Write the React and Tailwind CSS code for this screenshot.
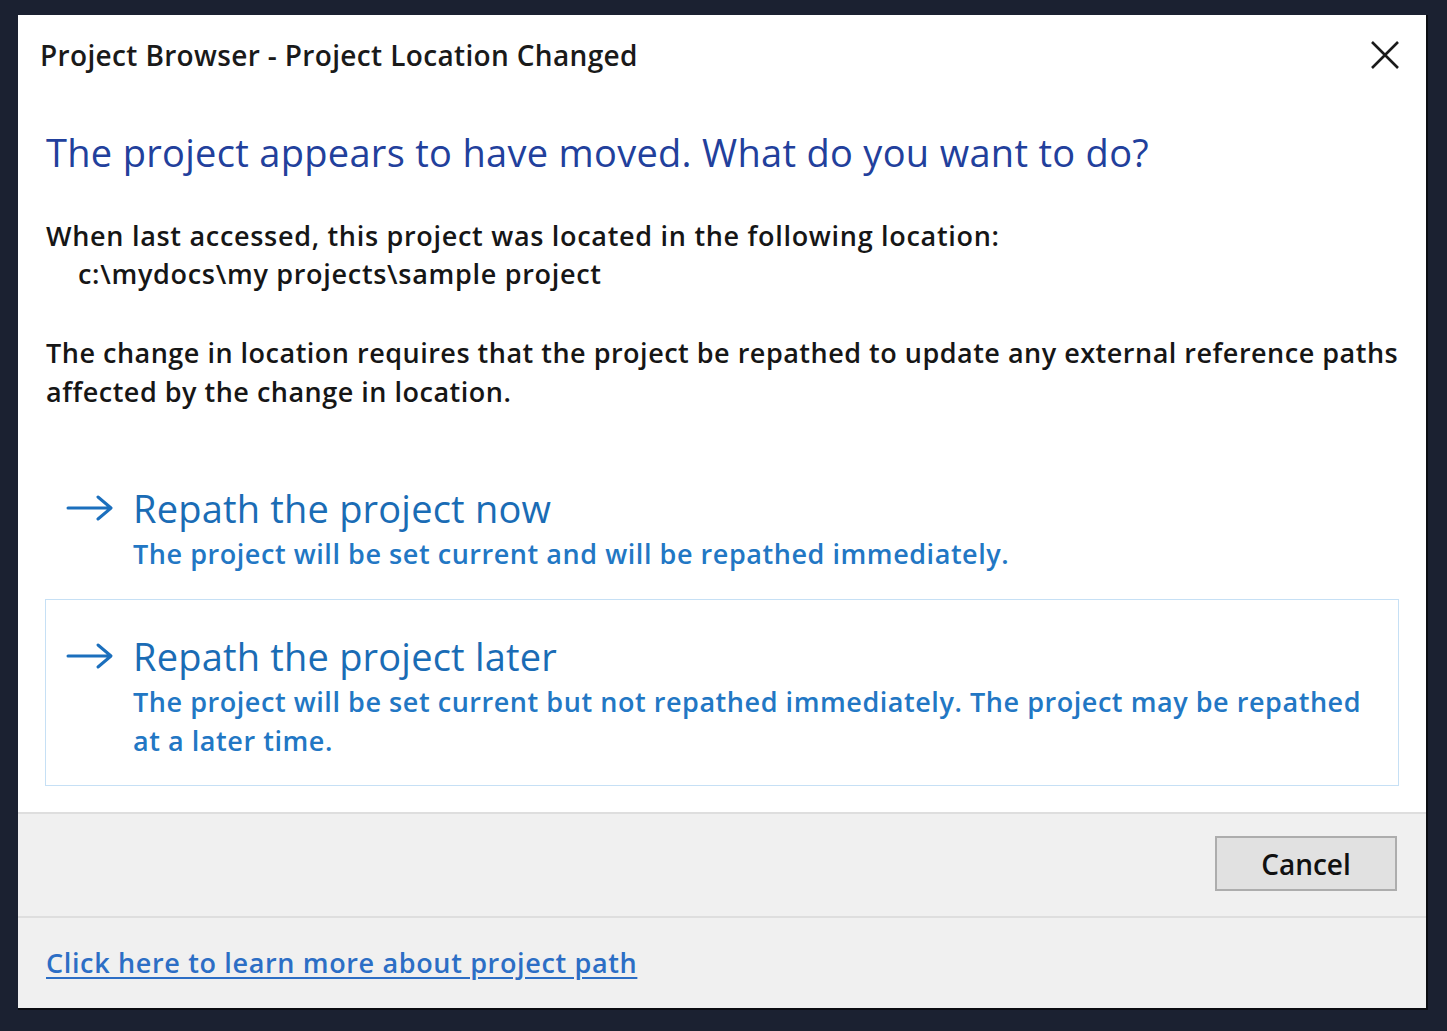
import React from 'react';

const font = { fontFamily: '"Open Sans", "Noto Sans", sans-serif' };

const Arrow = () => (
    <svg width="48" height="28" viewBox="0 0 48 28" className="shrink-0">
        <path d="M2 14 H44 M32 3 L45 14 L32 25" fill="none" stroke="#1b6fbd" strokeWidth="3" strokeLinecap="round" strokeLinejoin="round" />
    </svg>
);

const CommandLink = ({ title, lines, boxed }) => (
    <div className={`flex border pt-[30px] pb-[25px] pl-[20px] pr-[20px] ${boxed ? 'border-[#c6e0f5]' : 'border-transparent'}`}>
        <div className="w-[67px] h-[52px] flex items-center">
            <Arrow />
        </div>
        <div>
            <div className="text-[38px] tracking-[0.2px] leading-[52px] text-[#1a6cb5]">{title}</div>
            {lines.map((l, i) => (
                <div key={i} className="text-[27px] font-semibold tracking-[0.55px] leading-[39px] text-[#2277c4]">{l}</div>
            ))}
        </div>
    </div>
);

export default function App() {
    return (
        <div className="w-[1447px] h-[1031px] bg-[#1b2131] pt-[15px] pl-[18px] overflow-hidden" style={font}>
            <div className="w-[1410px] h-[995px] bg-white flex flex-col border-r-2 border-b-2 border-[#0b0d12]">
                {/* Title bar */}
                <div className="h-[80px] flex items-center justify-between pl-[22px] pr-[26px]">
                    <span className="text-[28px] font-semibold tracking-[0.35px] text-[#1a1a1a]">Project Browser - Project Location Changed</span>
                    <svg width="30" height="30" viewBox="0 0 30 30">
                        <path d="M2 2 L28 28 M28 2 L2 28" stroke="#1a1a1a" strokeWidth="2.6" />
                    </svg>
                </div>

                {/* Content */}
                <div className="flex-1 px-[27px]">
                    <div className="pl-[1px] mt-[32px] text-[38px] tracking-[0.3px] leading-[50px] text-[#22409c]">
                        The project appears to have moved. What do you want to do?
                    </div>
                    <div className="pl-[1px] mt-[40px] text-[27px] font-semibold tracking-[0.7px] leading-[38px] text-[#161616]">
                        <div>When last accessed, this project was located in the following location:</div>
                        <div className="pl-[32px]">c:\mydocs\my projects\sample project</div>
                    </div>
                    <div className="pl-[1px] mt-[40px] text-[27px] font-semibold tracking-[0.5px] leading-[39px] text-[#161616]">
                        The change in location requires that the project be repathed to update any external reference paths affected by the change in location.
                    </div>
                    <div className="mt-[40px]">
                        <CommandLink title="Repath the project now" lines={['The project will be set current and will be repathed immediately.']} />
                        <CommandLink
                            boxed
                            title="Repath the project later"
                            lines={['The project will be set current but not repathed immediately. The project may be repathed', 'at a later time.']}
                        />
                    </div>
                </div>

                {/* Footer */}
                <div className="h-[104px] shrink-0 bg-[#f0f0f0] border-t-2 border-[#dedede] flex justify-end items-start pt-[22px] pr-[29px]">
                    <button className="w-[182px] h-[55px] bg-[#e1e1e1] border-2 border-[#adadad] text-[28px] font-semibold text-[#111]">Cancel</button>
                </div>
                <div className="h-[92px] shrink-0 bg-[#f0f0f0] border-t-2 border-[#dedede] flex items-center pl-[28px]">
                    <a href="#" className="text-[27px] font-semibold tracking-[0.65px] text-[#2c6ec5] underline underline-offset-4">Click here to learn more about project path</a>
                </div>
            </div>
        </div>
    );
}
